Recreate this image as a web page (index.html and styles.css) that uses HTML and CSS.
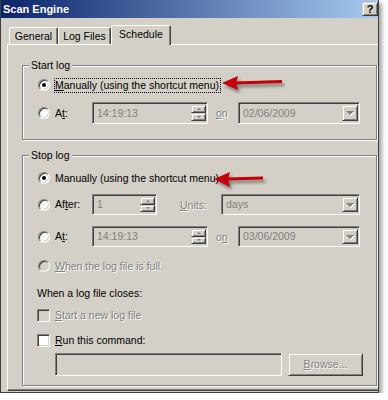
FILE: index.html
```html
<!DOCTYPE html>
<html lang="en">
<head>
    <meta charset="UTF-8">
    <meta name="viewport" content="width=device-width, initial-scale=1.0">
    <title>Scan Engine</title>
    <link rel="stylesheet" href="styles.css">
</head>

<body>
    <div class="window">
        <div class="titlebar">
            <span class="title">Scan Engine</span>
            <span class="help-btn">?</span>
        </div>

        <div class="dialog-body">
            <div class="tabs">
                <div class="tab tab-general">General</div>
                <div class="tab tab-logfiles">Log Files</div>
                <div class="tab tab-schedule active">Schedule</div>
            </div>

            <div class="panel">
                <fieldset class="group group-start">
                    <legend>Start log</legend>

                    <div class="row row-manual">
                        <span class="radio checked"></span>
                        <span class="label focus"><u>M</u>anually (using the shortcut menu)</span>
                    </div>

                    <div class="row row-field row-start-at">
                        <span class="radio"></span>
                        <span class="label label-fixed">A<u>t</u>:</span>
                        <div class="field field-time">
                            <span class="value">14:19:13</span>
                            <span class="spin"><span class="spin-btn up"></span><span class="spin-btn down"></span></span>
                        </div>
                        <span class="label-on disabled"><u>o</u>n</span>
                        <div class="field combo-date">
                            <span class="value">02/06/2009</span>
                            <span class="drop"></span>
                        </div>
                    </div>
                </fieldset>

                <fieldset class="group group-stop">
                    <legend>Stop log</legend>

                    <div class="row row-manual">
                        <span class="radio checked"></span>
                        <span class="label">Manually (using the shortcut menu)</span>
                    </div>

                    <div class="row row-field row-after">
                        <span class="radio"></span>
                        <span class="label label-fixed">Af<u>t</u>er:</span>
                        <div class="field field-count">
                            <span class="value">1</span>
                            <span class="spin"><span class="spin-btn up"></span><span class="spin-btn down"></span></span>
                        </div>
                        <span class="label-units disabled"><u>U</u>nits:</span>
                        <div class="field combo-units">
                            <span class="value">days</span>
                            <span class="drop"></span>
                        </div>
                    </div>

                    <div class="row row-field row-stop-at">
                        <span class="radio"></span>
                        <span class="label label-fixed">A<u>t</u>:</span>
                        <div class="field field-time">
                            <span class="value">14:19:13</span>
                            <span class="spin"><span class="spin-btn up"></span><span class="spin-btn down"></span></span>
                        </div>
                        <span class="label-on disabled">o<u>n</u></span>
                        <div class="field combo-date">
                            <span class="value">03/06/2009</span>
                            <span class="drop"></span>
                        </div>
                    </div>

                    <div class="row row-full">
                        <span class="radio disabled-box"></span>
                        <span class="label disabled"><u>W</u>hen the log file is full.</span>
                    </div>

                    <div class="row row-closes">
                        <span class="label">When a log file closes:</span>
                    </div>

                    <div class="row row-check row-newlog">
                        <span class="checkbox disabled-box"></span>
                        <span class="label disabled"><u>S</u>tart a new log file</span>
                    </div>

                    <div class="row row-check row-run">
                        <span class="checkbox"></span>
                        <span class="label"><u>R</u>un this command:</span>
                    </div>

                    <div class="row row-command">
                        <div class="field field-command"></div>
                        <span class="button disabled"><u>B</u>rowse...</span>
                    </div>
                </fieldset>
            </div>
        </div>

        <!-- red call-out arrows drawn over the dialog -->
        <svg class="arrow arrow-start" width="70" height="24" viewBox="0 0 70 24">
            <line x1="15" y1="11" x2="62" y2="9.5" stroke="#c4000b" stroke-width="3"/>
            <polygon points="2,11 18,4 16,11 18,18" fill="#c4000b"/>
        </svg>
        <svg class="arrow arrow-stop" width="60" height="24" viewBox="0 0 60 24">
            <line x1="15" y1="11" x2="51" y2="10" stroke="#c4000b" stroke-width="3"/>
            <polygon points="2,11 18,4 16,11 18,19" fill="#c4000b"/>
        </svg>
    </div>
</body>
</html>
```

FILE: styles.css
```css
:root {
    --face: #d4d0c8;
    --shadow: #808080;
    --dark: #404040;
    --light: #fff;
    --disabled-text: #808080;
}

* {
    box-sizing: border-box;
    margin: 0;
    padding: 0;
}

body {
    background: #fff;
    font-family: "Liberation Sans", Arial, sans-serif;
    font-size: 10.5px;
    color: #000;
}

u {
    text-decoration: underline;
    text-underline-offset: 1px;
}

.window {
    position: relative;
    width: 379px;
    height: 393px;
    background: var(--face);
    border: 1px solid var(--dark);
    border-top: 0;
    box-shadow: 3px 3px 4px rgba(0, 0, 0, 0.35);
    display: flex;
    flex-direction: column;
}

/* title bar */
.titlebar {
    height: 18px;
    display: flex;
    align-items: center;
    justify-content: space-between;
    padding-left: 2px;
    background: linear-gradient(to right, #0a246a, #a6caf0);
}

.title {
    color: #fff;
    font-weight: bold;
    font-size: 11px;
}

.help-btn {
    width: 16px;
    height: 14px;
    background: var(--face);
    border: 1px solid;
    border-color: var(--face) var(--dark) var(--dark) var(--face);
    box-shadow: inset 1px 1px var(--light), inset -1px -1px var(--shadow);
    font-weight: bold;
    font-size: 11px;
    line-height: 12px;
    text-align: center;
}

/* tabs */
.dialog-body {
    flex: 1;
    display: flex;
    flex-direction: column;
    padding: 7px 0 1px 6px;
}

.tabs {
    display: flex;
    align-items: flex-end;
    height: 19px;
    padding-left: 2px;
}

.tab {
    height: 17px;
    border: 1px solid var(--light);
    border-bottom: 0;
    border-right-color: var(--dark);
    border-radius: 2px 2px 0 0;
    box-shadow: inset -1px 0 var(--shadow);
    text-align: center;
    line-height: 16px;
}

.tab-general { width: 49px; }
.tab-logfiles { width: 53px; }
.tab-schedule { width: 60px; }

.tab.active {
    position: relative;
    height: 20px;
    margin-bottom: -1px;
    background: var(--face);
    line-height: 16px;
    padding-bottom: 3px;
}

.panel {
    flex: 1;
    border-top: 1px solid var(--light);
    border-left: 1px solid var(--light);
    border-bottom: 1px solid var(--dark);
    box-shadow: inset 0 -1px var(--shadow);
    padding: 14px 1px 0 14px;
}

/* group boxes */
.group {
    min-width: 0;
    border: 1px solid var(--shadow);
    box-shadow: inset 1px 1px var(--light), 1px 1px var(--light);
}

.group legend {
    margin-left: 6px;
    padding: 0 2px;
    line-height: 13px;
    background: var(--face);
}

.group-start { padding-bottom: 15px; }
.group-stop {
    margin-top: 9px;
    padding-bottom: 9px;
}

.row {
    display: flex;
    align-items: center;
    padding-left: 15px;
    height: 16px;
}

.row-manual { height: 22px; }
.group-start .row-manual { margin-top: 2px; }
.group-stop .row-manual { margin-top: 5px; }

.row-start-at { height: 22px; margin-top: 6px; }
.row-after { height: 21px; margin-top: 5px; }
.row-stop-at { height: 21px; margin-top: 11px; }
.row-full { margin-top: 11px; }
.row-closes { margin-top: 11px; padding-left: 14px; }
.row-check { padding-left: 14px; }
.row-newlog { margin-top: 6px; }
.row-run { margin-top: 9px; }
.row-command {
    height: 23px;
    margin-top: 5px;
    padding-left: 32px;
}

.label {
    line-height: 13px;
    margin-left: 5px;
    white-space: nowrap;
}

.label-fixed { width: 37px; }

.focus {
    margin-left: 4px;
    padding-right: 1px;
    border: 1px dotted #000;
}

.row-closes .label { margin-left: 0; }

.disabled {
    color: var(--disabled-text);
    text-shadow: 1px 1px 0 var(--light);
}

.label-on {
    width: 22px;
    margin-left: 8px;
}

.label-units {
    width: 41px;
    margin-left: 23px;
}

/* radio and check boxes */
.radio,
.checkbox {
    flex: none;
    position: relative;
    background: var(--light);
    border: 1px solid;
    border-color: var(--shadow) var(--light) var(--light) var(--shadow);
    box-shadow: inset 1px 1px var(--dark), inset -1px -1px var(--face);
}

.radio {
    width: 12px;
    height: 12px;
    border-radius: 50%;
}

.checkbox {
    width: 13px;
    height: 13px;
}

.radio.checked::after {
    content: "";
    position: absolute;
    left: 3px;
    top: 3px;
    width: 4px;
    height: 4px;
    border-radius: 50%;
    background: #000;
}

.disabled-box { background: var(--face); }

/* edit fields, spinners and combos */
.field {
    flex: none;
    height: 100%;
    display: flex;
    align-items: center;
    border: 1px solid;
    border-color: var(--shadow) var(--light) var(--light) var(--shadow);
    box-shadow: inset 1px 1px var(--dark), inset -1px -1px var(--face);
    padding: 2px 1px 2px 2px;
    color: var(--disabled-text);
}

.field .value {
    flex: 1;
    padding-left: 2px;
    line-height: 13px;
}

.field-time { width: 116px; }
.field-count { width: 65px; }
.combo-date { width: 122px; }
.combo-units { width: 139px; }
.field-command { width: 227px; }

.spin {
    width: 15px;
    height: 100%;
    display: flex;
    flex-direction: column;
}

.spin-btn,
.drop,
.button {
    position: relative;
    background: var(--face);
    border: 1px solid;
    border-color: var(--face) var(--dark) var(--dark) var(--face);
    box-shadow: inset 1px 1px var(--light), inset -1px -1px var(--shadow);
}

.spin-btn { flex: 1; }

.spin-btn::after,
.drop::after {
    content: "";
    position: absolute;
    left: 50%;
    top: 50%;
    width: 0;
    height: 0;
    border-left: 2px solid transparent;
    border-right: 2px solid transparent;
    transform: translate(-50%, -50%);
}

.spin-btn.up::after { border-bottom: 2px solid var(--shadow); }
.spin-btn.down::after { border-top: 2px solid var(--shadow); }

.drop {
    width: 16px;
    height: 100%;
}

.drop::after {
    border-left-width: 4px;
    border-right-width: 4px;
    border-top: 4px solid var(--shadow);
    filter: drop-shadow(1px 1px 0 var(--light));
}

.button {
    width: 75px;
    height: 23px;
    margin-left: 6px;
    text-align: center;
    line-height: 21px;
}

/* call-out arrows */
.arrow {
    position: absolute;
    overflow: visible;
    filter: drop-shadow(2px 3px 1.5px rgba(0, 0, 0, 0.4));
}

.arrow-start {
    left: 219px;
    top: 72px;
}

.arrow-stop {
    left: 211px;
    top: 168px;
}
```
